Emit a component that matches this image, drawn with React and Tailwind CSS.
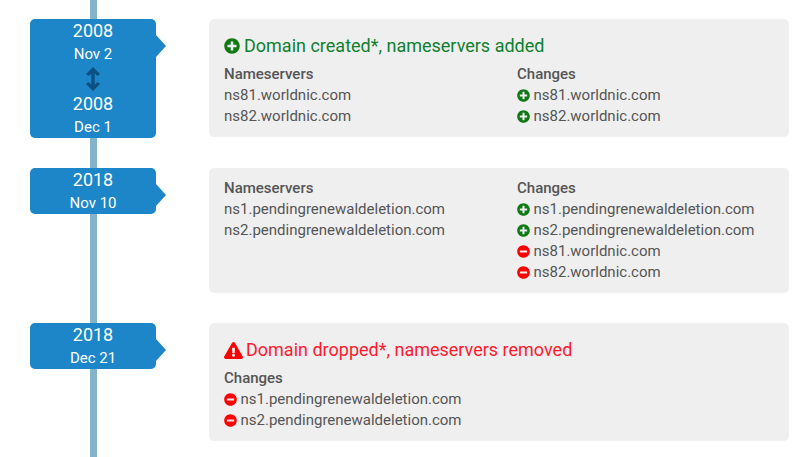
import React from 'react';
import { FaPlusCircle, FaMinusCircle, FaExclamationTriangle } from 'react-icons/fa';

const Added = ({ name }) => (
    <div className="flex items-center">
        <FaPlusCircle className="w-[13px] h-[13px] mr-[3.5px] mb-px text-[#0f7a14]" />
        <span>{name}</span>
    </div>
);

const Removed = ({ name }) => (
    <div className="flex items-center">
        <FaMinusCircle className="w-[13px] h-[13px] mr-[3.5px] mb-px text-[#ff0000]" />
        <span>{name}</span>
    </div>
);

const DateBlock = ({ year, day }) => (
    <div className="text-center text-white">
        <div className="text-[18px] leading-[24px]">{year}</div>
        <div className="text-[15px] leading-[22px]">{day}</div>
    </div>
);

const Badge = ({ children }) => (
    <div className="relative w-[126px] shrink-0 self-start rounded-[5px] bg-[#1c86c8]">
        {children}
        {/* little pointer towards the card */}
        <div className="absolute left-full top-[16px] w-0 h-0 border-y-[11px] border-l-[10px] border-y-transparent border-l-[#1c86c8]" />
    </div>
);

const App = () => {
    return (
        <div className="relative h-[457px] w-[811px] overflow-hidden bg-white font-['Roboto',sans-serif] text-[15px] leading-[21px] text-[#555555]">
            <div className="absolute left-[90px] top-0 bottom-0 w-[7px] bg-[#84b3cc]" />

            <div className="relative flex flex-col gap-[30px] pt-[19px] pl-[30px] pr-[22px]">
                <div className="flex gap-[53px]">
                    <Badge>
                        <DateBlock year="2008" day="Nov 2" />
                        <div className="flex h-[27px] items-center justify-center">
                            <svg viewBox="0 0 14 24" className="w-[14px] h-[24px] fill-[#0b5080]">
                                <polygon points="7,0 14,7 11.5,9 8.7,6.5 8.7,17.5 11.5,15 14,17 7,24 0,17 2.5,15 5.3,17.5 5.3,6.5 2.5,9 0,7" />
                            </svg>
                        </div>
                        <DateBlock year="2008" day="Dec 1" />
                    </Badge>
                    <div className="flex-1 self-start rounded-[5px] bg-[#efefef] px-[15px] py-[10px]">
                        <div className="flex items-center pt-1 pb-[5px] text-[18px] leading-[26px] text-[#0f8030]">
                            <FaPlusCircle className="w-[16px] h-[16px] mr-[4px] text-[#0f7a14]" />
                            <span>Domain created*, nameservers added</span>
                        </div>
                        <div className="flex">
                            <div className="w-[293px]">
                                <div className="font-medium">Nameservers</div>
                                <div>ns81.worldnic.com</div>
                                <div>ns82.worldnic.com</div>
                            </div>
                            <div>
                                <div className="font-medium">Changes</div>
                                <Added name="ns81.worldnic.com" />
                                <Added name="ns82.worldnic.com" />
                            </div>
                        </div>
                    </div>
                </div>

                <div className="flex gap-[53px]">
                    <Badge>
                        <DateBlock year="2018" day="Nov 10" />
                    </Badge>
                    <div className="flex flex-1 rounded-[5px] bg-[#efefef] px-[15px] py-[10px]">
                        <div className="w-[293px]">
                            <div className="font-medium">Nameservers</div>
                            <div>ns1.pendingrenewaldeletion.com</div>
                            <div>ns2.pendingrenewaldeletion.com</div>
                        </div>
                        <div>
                            <div className="font-medium">Changes</div>
                            <Added name="ns1.pendingrenewaldeletion.com" />
                            <Added name="ns2.pendingrenewaldeletion.com" />
                            <Removed name="ns81.worldnic.com" />
                            <Removed name="ns82.worldnic.com" />
                        </div>
                    </div>
                </div>

                <div className="flex gap-[53px]">
                    <Badge>
                        <DateBlock year="2018" day="Dec 21" />
                    </Badge>
                    <div className="flex-1 rounded-[5px] bg-[#efefef] px-[15px] py-[10px]">
                        <div className="flex items-center pt-1 pb-[5px] text-[18px] leading-[26px] text-[#ff1a2e]">
                            <FaExclamationTriangle className="w-[19px] h-[17px] mr-[3px] text-[#ff0000]" />
                            <span>Domain dropped*, nameservers removed</span>
                        </div>
                        <div className="font-medium">Changes</div>
                        <Removed name="ns1.pendingrenewaldeletion.com" />
                        <Removed name="ns2.pendingrenewaldeletion.com" />
                    </div>
                </div>
            </div>
        </div>
    );
};

export default App;
